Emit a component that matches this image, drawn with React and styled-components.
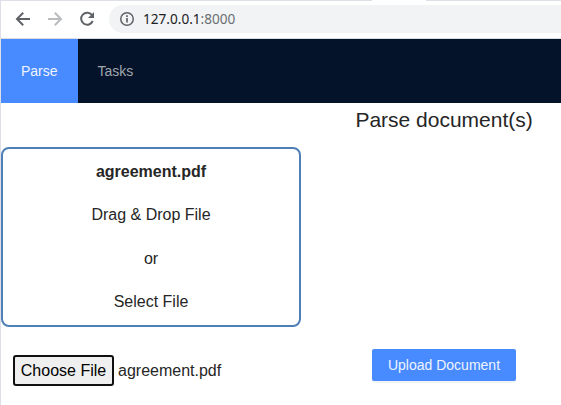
import React from "react";
import styled, { createGlobalStyle } from "styled-components";

const GlobalStyle = createGlobalStyle`
  * { box-sizing: border-box; }
  body { margin: 0; background: #fff; overflow: hidden; }
`;

const Window = styled.div`
  width: 561px;
  height: 405px;
  overflow: hidden;
  border-left: 1px solid #dedee6;
  background: #fff;
  color: #262626;
  font: 16px/24px "Liberation Sans", Arial, sans-serif;
`;

const TabEdge = styled.div`
  display: flex;
  justify-content: space-between;
  height: 1px;
`;

const EdgeLine = styled.div`
  width: ${(p) => p.$width}px;
  height: 1px;
  background: #dee0e7;
`;

const Toolbar = styled.div`
  display: flex;
  align-items: center;
  height: 38px;
  padding: 0 0 1px 14px;
  border-bottom: 1px solid #dadce0;
`;

const NavIcon = styled.svg`
  flex: none;
  width: 16px;
  height: 16px;
  margin-right: 16px;
  fill: none;
  stroke: ${(p) => (p.$muted ? "#babcbe" : "#5f6368")};
  stroke-width: 2;
`;

const AddressBar = styled.div`
  display: flex;
  flex: 1;
  align-items: center;
  height: 28px;
  margin-left: -2px;
  padding-left: 10px;
  border-radius: 14px 0 0 14px;
  background: #f1f3f4;
`;

const InfoIcon = styled.svg`
  width: 16px;
  height: 16px;
  margin-right: 8px;
  fill: none;
  stroke: #5f6368;
`;

const Url = styled.span`
  color: #202124;
  font: 13.6px/20px "Noto Sans", sans-serif;
`;

const Port = styled.span`
  color: #6b6f73;
`;

const Navbar = styled.nav`
  display: flex;
  height: 64px;
  background: #041329;
`;

const NavLink = styled.a`
  display: flex;
  align-items: center;
  height: 64px;
  padding: 0 20px;
  background: ${(p) => (p.$active ? "#488aff" : "transparent")};
  color: ${(p) => (p.$active ? "#eef4ff" : "#a0a5ad")};
  font-size: 14px;
`;

const Title = styled.h1`
  margin: 0;
  height: 44px;
  padding: 1px 0 0 354.4px;
  font-size: 21px;
  font-weight: 400;
  line-height: 32px;
`;

const DropZone = styled.section`
  display: flex;
  flex-direction: column;
  align-items: center;
  gap: 19.3px;
  width: 300px;
  height: 180px;
  padding-top: 11px;
  border: 2px solid #4e80b7;
  border-radius: 8px;
`;

const FileName = styled.strong`
  font-weight: 700;
`;

const Actions = styled.div`
  display: flex;
  align-items: flex-start;
  padding: 22px 0 0 12px;
`;

const FilePicker = styled.div`
  display: flex;
  align-items: center;
  gap: 4px;
  width: 359px;
  padding-top: 6px;
`;

const ChooseButton = styled.button`
  width: 101px;
  height: 31px;
  padding: 0;
  border: 2px solid #101010;
  border-radius: 3px;
  background: #efefef;
  color: #000;
  font: 16px/24px "Liberation Sans", Arial, sans-serif;
`;

const UploadButton = styled.button`
  width: 144px;
  height: 32px;
  padding: 0;
  border: 0;
  border-radius: 2px;
  background: #488aff;
  box-shadow: 0 2px 0 rgba(0, 0, 0, 0.045);
  color: #eef4ff;
  font: 14px/22px "Liberation Sans", Arial, sans-serif;
`;

export default function App() {
  return (
    <>
      <GlobalStyle />
      <Window>
        <TabEdge>
          <EdgeLine $width={371} />
          <EdgeLine $width={135} />
        </TabEdge>
        <Toolbar>
          <NavIcon viewBox="0 0 16 16">
            <path d="M15 8H2.5M8.2 1.8L2 8l6.2 6.2" />
          </NavIcon>
          <NavIcon viewBox="0 0 16 16" $muted>
            <path d="M1 8h12.5M7.8 1.8L14 8l-6.2 6.2" />
          </NavIcon>
          <NavIcon viewBox="0 0 16 16">
            <path d="M13 4.2A6 6 0 1 0 13.7 10" />
            <path d="M15 1v6H9z" fill="#5f6368" stroke="none" />
          </NavIcon>
          <AddressBar>
            <InfoIcon viewBox="0 0 16 16">
              <circle cx="8" cy="8" r="6.25" strokeWidth="1.5" />
              <path d="M8 7v4.5M8 4.3v1.8" strokeWidth="1.7" />
            </InfoIcon>
            <Url>127.0.0.1<Port>:8000</Port></Url>
          </AddressBar>
        </Toolbar>
        <Navbar>
          <NavLink $active>Parse</NavLink>
          <NavLink>Tasks</NavLink>
        </Navbar>
        <Title>Parse document(s)</Title>
        <DropZone>
          <FileName>agreement.pdf</FileName>
          <span>Drag &amp; Drop File</span>
          <span>or</span>
          <span>Select File</span>
        </DropZone>
        <Actions>
          <FilePicker>
            <ChooseButton>Choose File</ChooseButton>
            <span>agreement.pdf</span>
          </FilePicker>
          <UploadButton>Upload Document</UploadButton>
        </Actions>
      </Window>
    </>
  );
}
